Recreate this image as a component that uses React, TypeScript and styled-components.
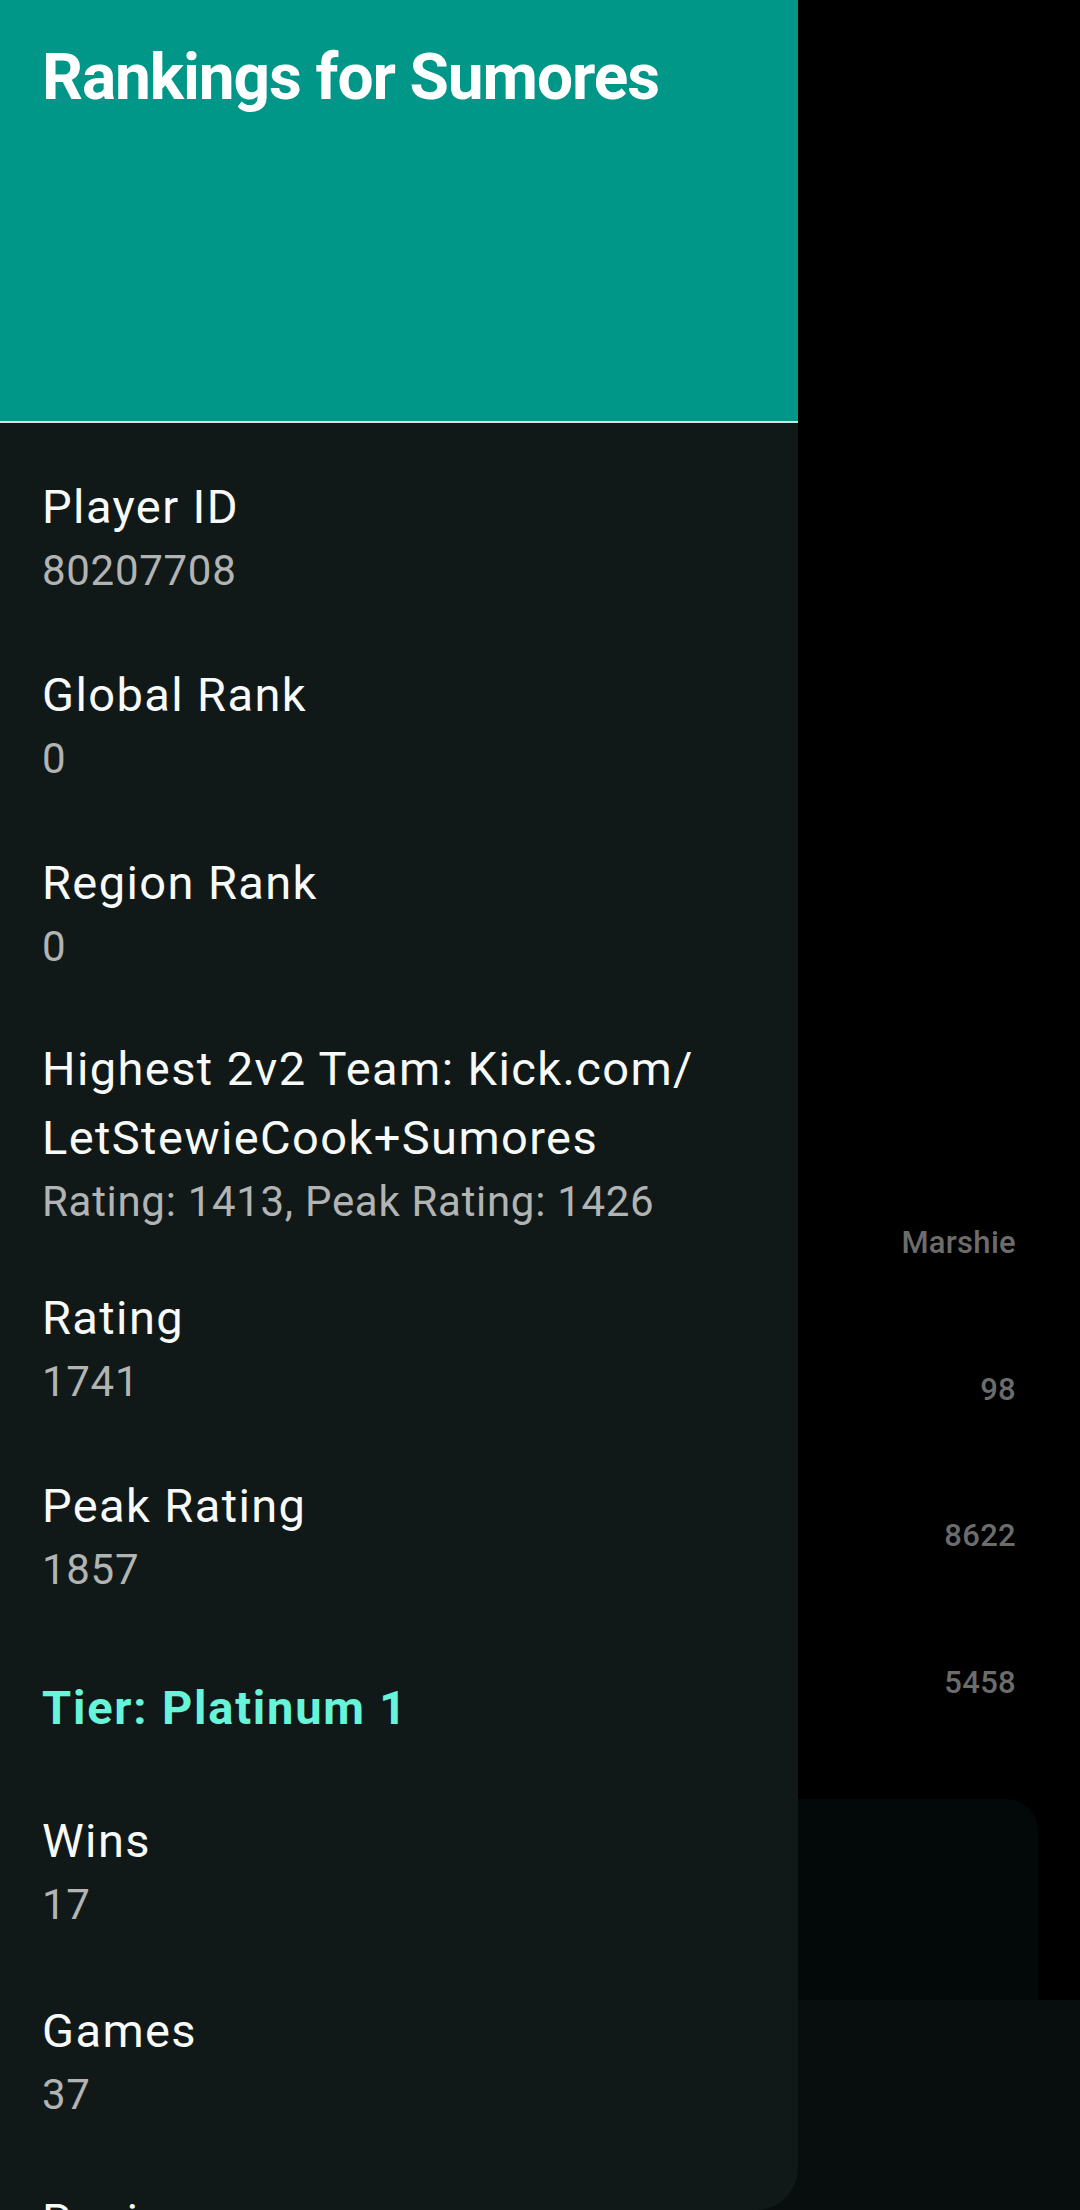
import React from "react";
import styled, { createGlobalStyle } from "styled-components";

const GlobalStyle = createGlobalStyle`
  html, body {
    margin: 0;
    padding: 0;
    background: #000;
  }
  body {
    font-family: Roboto, "Noto Sans", "Liberation Sans", sans-serif;
  }
  * { box-sizing: border-box; }
`;

const Screen = styled.div`
  position: relative;
  width: 1080px;
  height: 2210px;
  overflow: hidden;
  background: #000;
`;

const Main = styled.main`
  display: flex;
  flex-direction: column;
  height: 100%;
  padding-top: 1170px;
`;

const StatRow = styled.div`
  height: 146.6px;
  padding-right: 64px;
  text-align: right;
  font-size: 31px;
  line-height: 146.6px;
  font-weight: 500;
  letter-spacing: 0.3px;
  color: #6c6c6c;
`;

const Card = styled.div`
  flex: 1;
  margin: 43px 42px 0;
  background: #030808;
  border-radius: 32px 32px 0 0;
`;

const BottomBar = styled.div`
  position: absolute;
  left: 0;
  right: 0;
  bottom: 0;
  height: 210px;
  background: #080e0e;
`;

const Drawer = styled.aside`
  position: absolute;
  top: 0;
  left: 0;
  bottom: 0;
  width: 798px;
  display: flex;
  flex-direction: column;
  background: #111918;
  border-bottom-right-radius: 42px;
  overflow: hidden;
`;

const Header = styled.header`
  flex: none;
  height: 423px;
  padding: 38px 42px 0;
  background: #009688;
  border-bottom: 2px solid #dcdede;
`;

const Title = styled.h1`
  margin: 0;
  font-size: 64px;
  line-height: 80px;
  font-weight: 700;
  letter-spacing: -1.1px;
  color: #ffffff;
`;

const StatList = styled.div`
  display: flex;
  flex-direction: column;
  padding: 49px 42px 0;
`;

const Item = styled.div<{ $gap: number }>`
  display: flex;
  flex-direction: column;
  margin-top: ${(p) => p.$gap}px;
`;

const Label = styled.div`
  font-size: 47px;
  line-height: 69px;
  letter-spacing: 1.4px;
  color: #f8f9f9;
`;

const Value = styled.div`
  font-size: 42px;
  line-height: 58px;
  letter-spacing: 0.7px;
  color: #b1b4b3;
  margin-top: 1px;
`;

const Tier = styled.div`
  font-size: 47px;
  line-height: 69px;
  font-weight: 700;
  letter-spacing: 1.8px;
  color: #66f5d8;
`;

type Stat = { label: React.ReactNode; value?: string; gap: number; tier?: boolean };

const stats: Stat[] = [
  { label: "Player ID", value: "80207708", gap: 0 },
  { label: "Global Rank", value: "0", gap: 60 },
  { label: "Region Rank", value: "0", gap: 60 },
  {
    label: (
      <>
        Highest 2v2 Team: Kick.com/<wbr />LetStewieCook+Sumores
      </>
    ),
    value: "Rating: 1413, Peak Rating: 1426",
    gap: 58,
  },
  { label: "Rating", value: "1741", gap: 52 },
  { label: "Peak Rating", value: "1857", gap: 60 },
  { label: "Tier: Platinum 1", gap: 74, tier: true },
  { label: "Wins", value: "17", gap: 64 },
  { label: "Games", value: "37", gap: 62 },
  { label: "Region", value: "US-East", gap: 62 },
];

const background = ["Marshie", "98", "8622", "5458"];

export default function App() {
  return (
    <Screen>
      <GlobalStyle />
      <Main>
        {background.map((t) => (
          <StatRow key={t}>{t}</StatRow>
        ))}
        <Card />
      </Main>
      <BottomBar />
      <Drawer>
        <Header>
          <Title>Rankings for Sumores</Title>
        </Header>
        <StatList>
          {stats.map((s, i) => (
            <Item key={i} $gap={s.gap}>
              {s.tier ? <Tier>{s.label}</Tier> : <Label>{s.label}</Label>}
              {s.value !== undefined && <Value>{s.value}</Value>}
            </Item>
          ))}
        </StatList>
      </Drawer>
    </Screen>
  );
}
